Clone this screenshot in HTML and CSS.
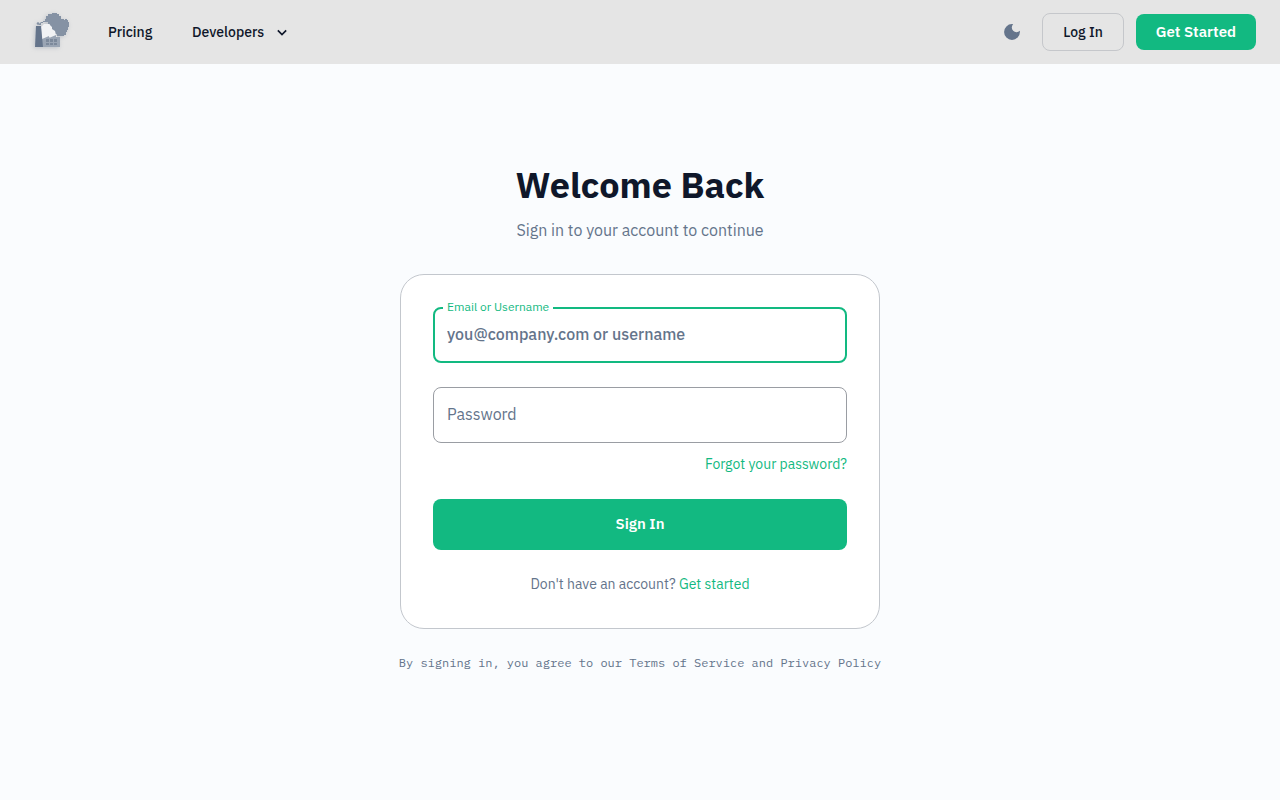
FILE: index.html
```html
<!DOCTYPE html>
<html lang="en">
<head>
<meta charset="UTF-8">
<meta name="viewport" content="width=device-width, initial-scale=1.0">
<title>Sign In</title>
<link rel="stylesheet" href="styles.css">
</head>
<body>

<header class="navbar">
  <a class="logo" href="#" aria-label="Home">
    <svg width="44" height="44" viewBox="0 2 44 44">
      <path class="smoke" d="M11 14h2v-1h2v-2h1V8h2V6h4V5h5v1h2v2h2v3h3v1h1v-1h2v1h1v2h1v5h-1v3h-1v2h-1v3h-2v1h-7v-2h-2v-2h-2v-2h-1v-3h-2v-3h-2v-2h-5v1h-2v2h-3z"/>
      <path class="steam" d="M11 19l3-3h5l3 3v2l3 2 1 4 1 2-7 2v-2l-8 3z"/>
      <path class="plant" d="M12 31l7-3v2l7-3v2h4v10H12z"/>
      <path class="chimney" d="M6 18h5l2 21H5z"/>
      <circle class="smoke" cx="8" cy="15.5" r="1.3"/>
      <path class="panes" d="M16 31h3v3h-3zM20 31h3v3h-3zM24 31h3v3h-3zM16 35h3v2h-3zM20 35h3v2h-3zM24 35h3v2h-3z"/>
    </svg>
  </a>

  <nav class="menu">
    <a class="menu-link" href="#">Pricing</a>
    <button class="menu-link" type="button">
      Developers
      <svg class="chevron" width="20" height="20" viewBox="0 0 24 24"><path d="M7 10l5 5 5-5"/></svg>
    </button>
  </nav>

  <div class="actions">
    <button class="theme-toggle" type="button" aria-label="Dark mode">
      <svg width="20" height="20" viewBox="0 0 24 24"><path d="M12 2.500a9.500 9.500 0 1 0 9.500 9.500c0-.500 0-.900-.100-1.400A5.500 5.500 0 0 1 13.400 2.600 9.500 9.500 0 0 0 12 2.500z"/></svg>
    </button>
    <button class="btn btn-outline" type="button">Log In</button>
    <button class="btn btn-primary" type="button">Get Started</button>
  </div>
</header>

<main class="page">
  <h1 class="title">Welcome Back</h1>
  <p class="subtitle">Sign in to your account to continue</p>

  <form class="card">
    <div class="field">
      <label class="field-label" for="email">Email or Username</label>
      <input class="field-input field-active" type="text" id="email" placeholder="you@company.com or username">
    </div>
    <div class="field">
      <input class="field-input" type="password" id="password" placeholder="Password" aria-label="Password">
    </div>
    <a class="link forgot" href="#">Forgot your password?</a>
    <button class="btn-submit" type="submit">Sign In</button>
    <p class="signup">Don't have an account? <a class="link" href="#">Get started</a></p>
  </form>

  <p class="terms">By signing in, you agree to our Terms of Service and Privacy Policy</p>
</main>

</body>
</html>
```
FILE: styles.css
```css
* {
  box-sizing: border-box;
}
body {
  margin: 0;
  min-height: 100vh;
  background-color: #fafcfe;
  color: #0f172a;
  font-family: "IBM Plex Sans", Roboto, sans-serif;
  font-size: 14px;
}
button, input {
  font-family: inherit;
}
h1, p {
  margin: 0;
}

/* top bar */
.navbar {
  display: flex;
  align-items: center;
  height: 64px;
  padding: 0 24px;
  background-color: #e5e5e5;
}
.logo {
  display: flex;
  margin: 0 30px 0 6px;
}
.logo svg {
  filter: drop-shadow(-1px 1px 2px rgba(100, 116, 139, 0.3));
}
.smoke {
  fill: #8592a4;
}
.steam {
  fill: #f1f2f4;
}
.plant {
  fill: #9aa5b4;
}
.chimney {
  fill: #64748b;
}
.panes {
  fill: #7c899b;
}
.menu {
  display: flex;
  align-items: center;
  gap: 32px;
}
.menu-link {
  display: flex;
  align-items: center;
  gap: 8px;
  padding: 0 0 0 4px;
  border: none;
  background: none;
  color: #0f172a;
  font-size: 14px;
  font-weight: 500;
  line-height: 20px;
  text-decoration: none;
  cursor: pointer;
}
a.menu-link {
  min-width: 52px;
}
.chevron {
  fill: none;
  stroke: #0f172a;
  stroke-width: 2;
}
.actions {
  display: flex;
  align-items: center;
  gap: 12px;
  margin-left: auto;
}
.theme-toggle {
  display: flex;
  padding: 8px;
  border: none;
  background: none;
  fill: #64748b;
  cursor: pointer;
}
.btn {
  height: 36px;
  padding: 0 20px;
  border: none;
  border-radius: 8px;
  font-size: 15px;
  font-weight: 500;
  cursor: pointer;
}
.btn-outline {
  height: 38px;
  border: 1px solid #c5c7cb;
  background: none;
  color: #0f172a;
  font-size: 14px;
}
.btn-primary {
  padding-bottom: 2px;
  background-color: #12b981;
  color: white;
  font-weight: 600;
}

/* sign in */
.page {
  display: flex;
  flex-direction: column;
  align-items: center;
  padding: 96px 24px 32px;
}
.title {
  font-size: 36px;
  font-weight: 700;
  line-height: 50px;
}
.subtitle {
  margin: 8px 0 32px;
  color: #64748b;
  font-size: 16px;
  line-height: 24px;
}
.card {
  display: flex;
  flex-direction: column;
  width: 100%;
  max-width: 480px;
  padding: 32px;
  border: 1px solid #c3c7cd;
  border-radius: 24px;
  background-color: white;
}
.field {
  position: relative;
  margin-bottom: 24px;
}
.field-label {
  position: absolute;
  top: -7px;
  left: 10px;
  padding: 0 4px;
  background-color: white;
  color: #12b981;
  font-size: 12px;
  line-height: 14px;
}
.field-input {
  display: block;
  width: 100%;
  height: 56px;
  padding: 0 13px 2px;
  border: 1px solid #9a9da3;
  border-radius: 8px;
  background: none;
  color: #0f172a;
  font-size: 16px;
}
.field-input::placeholder {
  color: #64748b;
  opacity: 1;
}
.field-active {
  padding: 0 12px 2px;
  border: 2px solid #12b981;
  outline: none;
  font-weight: 500;
}
.link {
  color: #12b981;
  text-decoration: none;
}
.forgot {
  align-self: flex-end;
  margin: -14px 0 24px;
  line-height: 22px;
}
.btn-submit {
  height: 51px;
  padding-bottom: 3px;
  border: none;
  border-radius: 8px;
  background-color: #12b981;
  color: white;
  font-size: 15px;
  font-weight: 600;
  cursor: pointer;
}
.signup {
  margin: 23px 0 1px;
  color: #64748b;
  line-height: 22px;
  text-align: center;
}
.terms {
  margin-top: 24px;
  color: #64748b;
  font-family: "IBM Plex Mono", "Liberation Mono", monospace;
  font-size: 12px;
  line-height: 20px;
}
```
